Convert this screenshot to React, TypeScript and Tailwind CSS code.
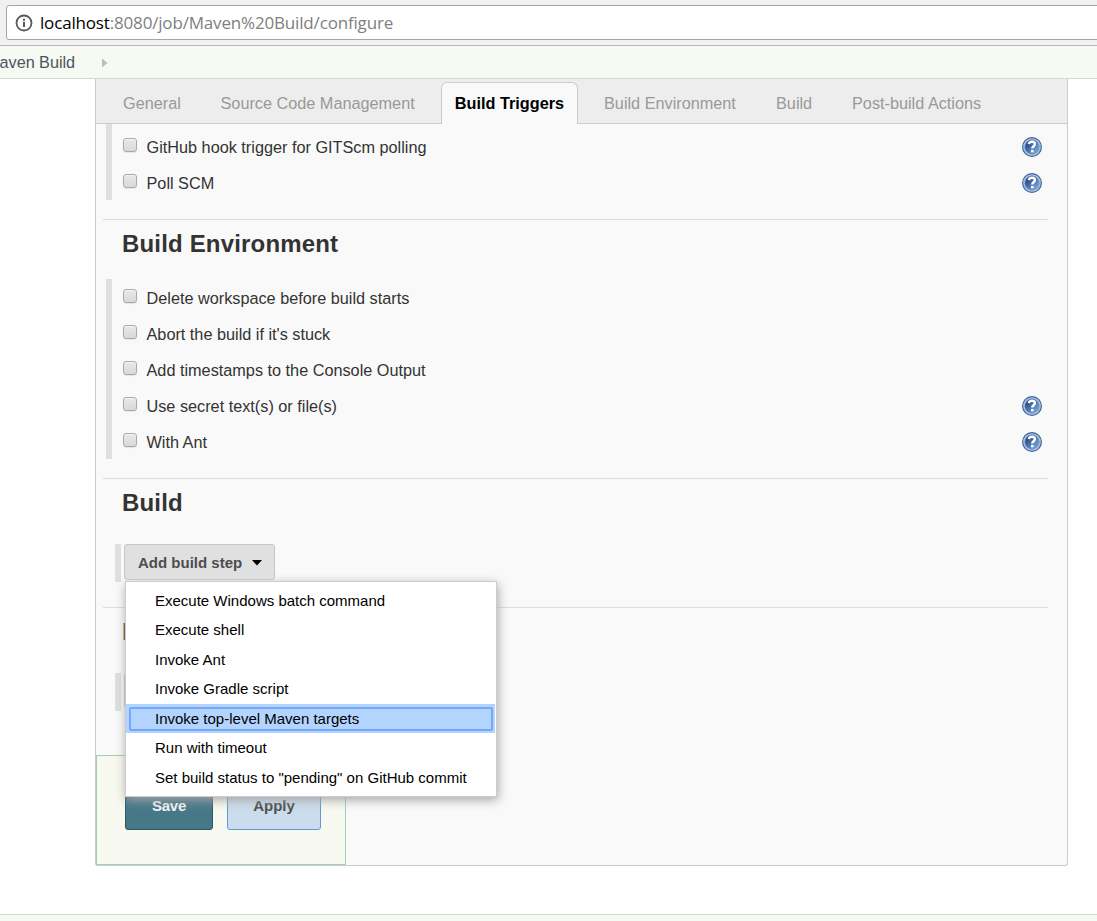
import type { ReactNode } from "react";

function InfoIcon() {
  return (
    <svg width="18" height="18" viewBox="0 0 18 18" className="shrink-0">
      <circle cx="9" cy="9" r="7.5" fill="none" stroke="#5a5a5a" strokeWidth="1.8" />
      <rect x="8" y="7.8" width="2" height="5.2" fill="#5a5a5a" />
      <rect x="8" y="4.8" width="2" height="2" fill="#5a5a5a" />
    </svg>
  );
}

function HelpIcon() {
  return (
    <svg width="20" height="20" viewBox="0 0 20 20" className="shrink-0">
      <defs>
        <linearGradient id="disc" x1="0" y1="0" x2="1" y2="1">
          <stop offset="0.2" stopColor="#234a8a" />
          <stop offset="1" stopColor="#8fb8e6" />
        </linearGradient>
      </defs>
      <circle cx="10" cy="10" r="9.4" fill="#b4c7e0" stroke="#3f669f" strokeWidth="1.2" />
      <circle cx="10" cy="10" r="7.2" fill="url(#disc)" stroke="#6f92c0" strokeWidth="0.8" />
      <path
        d="M6.9 7.2C7.1 5.2 8.4 4.8 10 4.8C11.9 4.8 12.9 5.6 12.9 7.1C12.9 9.2 10.3 9.3 10.3 11.6"
        fill="none"
        stroke="#fff"
        strokeWidth="2.5"
      />
      <rect x="9" y="12.9" width="2.6" height="2.4" fill="#fff" />
    </svg>
  );
}

function Tab({ children, className }: { children: ReactNode; className: string }) {
  return <div className={`shrink-0 whitespace-nowrap ${className}`}>{children}</div>;
}

function Option({ label, help }: { label: string; help?: boolean }) {
  return (
    <div className="flex h-9 items-center">
      <span className="mb-[2px] ml-[11px] h-[14px] w-[14px] shrink-0 rounded-[3px] border border-[#a9a9a9] bg-linear-to-b from-[#e8e8e8] to-[#d9d9d9] shadow-[inset_0_1px_1px_rgba(255,255,255,0.6),0_1px_1px_rgba(0,0,0,0.08)]" />
      <span className="ml-[9.5px] grow pt-[2px] text-[16.25px] leading-5 text-[#333]">{label}</span>
      {help && (
        <span className="mr-[25px] pt-px">
          <HelpIcon />
        </span>
      )}
    </div>
  );
}

function Heading({ children }: { children: ReactNode }) {
  return (
    <h2 className="ml-[26px] h-[59px] pt-[8px] text-[24px] leading-8 font-bold tracking-[0.17px] text-[#333]">
      {children}
    </h2>
  );
}

function Rule() {
  return <div className="mr-[19px] ml-[7px] h-px bg-[#dcdcdc]" />;
}

const steps = [
  "Execute Windows batch command",
  "Execute shell",
  "Invoke Ant",
  "Invoke Gradle script",
  "Invoke top-level Maven targets",
  "Run with timeout",
  'Set build status to "pending" on GitHub commit',
];

function StepMenu() {
  return (
    <div className="absolute top-[37px] left-px z-10 h-[216px] w-[372px] border border-[#ccc] bg-white pt-[3.9px] text-[15px] text-black shadow-[1px_3px_10px_#a6a6a6]">
      {steps.map((step, i) => (
        <div key={step} className="h-[29.5px]">
          {i === 4 ? (
            <div className="mr-px h-[29px] bg-[#b3d4ff] pt-[3px] pr-[2px] pb-[2px] pl-[3px]">
              <div className="flex h-full items-center rounded-[2px] border-2 border-[#73a7fb] pt-px pl-[24px] leading-4">
                {step}
              </div>
            </div>
          ) : (
            <div className="flex h-full items-center pl-[29px] leading-4">{step}</div>
          )}
        </div>
      ))}
    </div>
  );
}

export default function App() {
  return (
    <div className="flex h-[921px] w-[1097px] flex-col overflow-hidden bg-white font-['Liberation_Sans',Arial,sans-serif]">
      <div className="h-[46px] shrink-0 border-b border-[#b6b6b6] bg-[#f1f1f1] pt-[5px] pl-[6px]">
        <div className="-mr-2 flex h-[35px] items-center rounded-[3px] border border-[#a6a6a6] bg-white pl-[8px]">
          <InfoIcon />
          <span className="ml-[7px] font-['Open_Sans','Noto_Sans',sans-serif] text-[17px] tracking-[-0.17px] whitespace-nowrap text-[#808080]">
            <span className="text-black">localhost</span>:8080/job/Maven%20Build/configure
          </span>
        </div>
      </div>

      <div className="flex h-[33px] shrink-0 items-center border-b border-[#d3d9d3] bg-[#f6faf2]">
        <span className="-ml-[14px] w-[89px] text-right text-[16.25px] tracking-[-0.05px] whitespace-nowrap text-[#4d545d]">
          Maven Build
        </span>
        <svg width="6" height="10" viewBox="0 0 6 10" className="mt-px ml-[27px]">
          <path d="M0 0.5L5.5 5L0 9.5Z" fill="#bdbdbd" />
        </svg>
      </div>

      <div className="ml-[95px] flex h-[787px] w-[973px] shrink-0 flex-col rounded-b-[3px] border border-t-0 border-[#ccc] bg-[#f9f9f9]">
        <div className="flex h-[45px] shrink-0 border-b border-[#ccc] bg-[#ededed] text-[16.25px] leading-5 text-[#999]">
          <Tab className="w-[124px] pt-[14px] pl-[27px]">General</Tab>
          <Tab className="w-[221px] pt-[14px] pl-[0.5px]">Source Code Management</Tab>
          <Tab className="mt-[3px] h-[42px] w-[137px] rounded-t-[6px] border border-b-0 border-[#ccc] bg-[#f9f9f9] pt-[10px] text-center font-bold text-black">
            Build Triggers
          </Tab>
          <Tab className="w-[198px] pt-[14px] pl-[26px]">Build Environment</Tab>
          <Tab className="w-[76px] pt-[14px]">Build</Tab>
          <Tab className="pt-[14px]">Post-build Actions</Tab>
        </div>

        <div className="mb-[19px] ml-[10px] shrink-0 border-l-6 border-[#dfdfdf] pt-[4px]">
          <Option label="GitHub hook trigger for GITScm polling" help />
          <Option label="Poll SCM" help />
        </div>
        <Rule />
        <Heading>Build Environment</Heading>
        <div className="mb-[19px] ml-[10px] shrink-0 border-l-6 border-[#dfdfdf]">
          <Option label="Delete workspace before build starts" />
          <Option label="Abort the build if it's stuck" />
          <Option label="Add timestamps to the Console Output" />
          <Option label="Use secret text(s) or file(s)" help />
          <Option label="With Ant" help />
        </div>
        <Rule />
        <div className="h-[65px]">
          <Heading>Build</Heading>
        </div>
        <div className="mb-[25px] ml-[19px] h-[38px] shrink-0 border-l-6 border-[#dfdfdf] pl-[3px]">
          <div className="relative w-[151px]">
            <StepMenu />
            <button className="relative z-20 flex h-9 w-full items-center rounded-[3px] border border-[#c6c6c6] bg-[#e0e0e0] pt-[2px] pl-[13px] text-[15px] font-bold whitespace-nowrap text-[#4d4d4d]">
              Add build step
              <svg width="10" height="6" viewBox="0 0 10 6" className="mb-px ml-[10px]">
                <path d="M0 0H10L5 5.5Z" fill="#000" />
              </svg>
            </button>
          </div>
        </div>
        <Rule />
        <div className="h-[65px]">
          <Heading>Post-build Actions</Heading>
        </div>
        <div className="mb-[44px] ml-[19px] h-[38px] shrink-0 border-l-6 border-[#dfdfdf] pl-[3px]">
          <button className="h-9 w-[190px] rounded-[3px] border border-[#c6c6c6] bg-[#e0e0e0] text-[15px] font-bold text-[#4d4d4d]">
            Add post-build action
          </button>
        </div>
        <div className="flex h-[110px] w-[250px] shrink-0 gap-[14px] border border-[#a5ccb5] bg-[#f7f9f0] pt-[27px] pl-[28px] text-[15px] font-bold">
          <button className="h-[47px] w-[88px] rounded-[3px] border border-[#2f5763] bg-[#467887] tracking-[-0.2px] text-[#f5f5f5]">
            Save
          </button>
          <button className="h-[47px] w-[94px] rounded-[3px] border border-[#5f99d6] bg-[#cbdcec] text-[#4d4d4d]">
            Apply
          </button>
        </div>
      </div>
      <div className="mt-[48px] h-[7px] shrink-0 border-t border-[#d3d9d3] bg-[#f6faf2]" />
    </div>
  );
}
